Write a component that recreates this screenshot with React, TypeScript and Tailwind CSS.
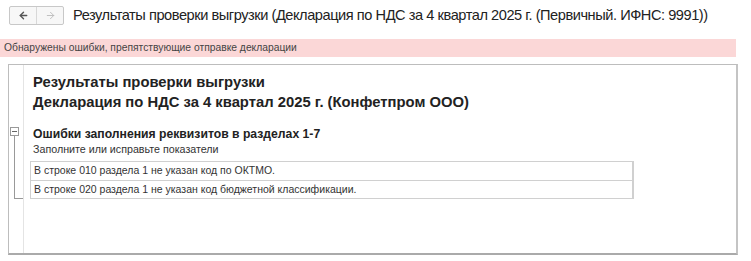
import { ArrowLeft, ArrowRight } from 'lucide-react'

const errors = [
  'В строке 010 раздела 1 не указан код по ОКТМО.',
  'В строке 020 раздела 1 не указан код бюджетной классификации.',
]

export default function App() {
  return (
    <div className="w-[751px] h-[261px] bg-white text-[#333] font-['Liberation_Sans',Arial,sans-serif] overflow-hidden">
      {/* header */}
      <div className="flex items-center h-[29px] pl-[9px] pt-[1px]">
        <div className="flex h-[19px] border border-[#c8c8c8] rounded-[2px] bg-[#f7f7f7]">
          <div className="w-[27px] flex items-center justify-center border-r border-[#d8d8d8]">
            <ArrowLeft size={11} strokeWidth={3} className="text-[#555]" />
          </div>
          <div className="w-[26px] flex items-center justify-center">
            <ArrowRight size={11} strokeWidth={2} className="text-[#bbb]" />
          </div>
        </div>
        <div className="ml-[9px] text-[14.6px] tracking-[-0.45px] leading-none text-[#222] whitespace-nowrap">
          Результаты проверки выгрузки (Декларация по НДС за 4 квартал 2025 г. (Первичный. ИФНС: 9991))
        </div>
      </div>

      {/* error bar */}
      <div className="mt-[10px] mr-[15px] h-[18px] bg-[#fbd7d7] flex items-center pl-[4px] text-[10.3px] text-[#444]">
        Обнаружены ошибки, препятствующие отправке декларации
      </div>

      {/* panel */}
      <div className="mt-[7px] ml-[8px] mr-[13px] h-[191px] border border-[#bdbdbd] border-r-2 border-b-2 border-r-[#c4c4c4] border-b-[#aaa] flex">
        <div className="w-[15px] border-r border-[#e4e4e4] shrink-0" />
        <div className="flex-1">
          <div className="pl-[9px] pt-[7px] text-[14.8px] leading-[20px] font-bold text-[#222]">
            <div>Результаты проверки выгрузки</div>
            <div>Декларация по НДС за 4 квартал 2025 г. (Конфетпром ООО)</div>
          </div>

          {/* tree group */}
          <div className="mt-[15px] relative">
            <div className="absolute left-[-14px] top-[0px] w-[9px] h-[9px] border border-[#999] bg-white flex items-center justify-center">
              <div className="w-[5px] h-px bg-[#666]" />
            </div>
            <div className="absolute left-[-10px] top-[9px] h-[63px] w-[9px] border-l border-b border-[#999]" />
            <div className="pl-[9px] text-[12.2px] leading-[15px] font-bold text-[#222]">
              Ошибки заполнения реквизитов в разделах 1-7
            </div>
            <div className="pl-[9px] text-[10.7px] leading-[15px] text-[#333]">
              Заполните или исправьте показатели
            </div>
            <div className="ml-[6px] mt-[4px] w-[604px] border border-[#d0d0d0] border-r-2">
              {errors.map((e, i) => (
                <div
                  key={e}
                  className={`h-[18px] flex items-center pl-[3px] text-[10.5px] text-[#333] ${i > 0 ? 'border-t border-[#d0d0d0]' : ''}`}
                >
                  {e}
                </div>
              ))}
            </div>
          </div>
        </div>
      </div>
    </div>
  )
}
